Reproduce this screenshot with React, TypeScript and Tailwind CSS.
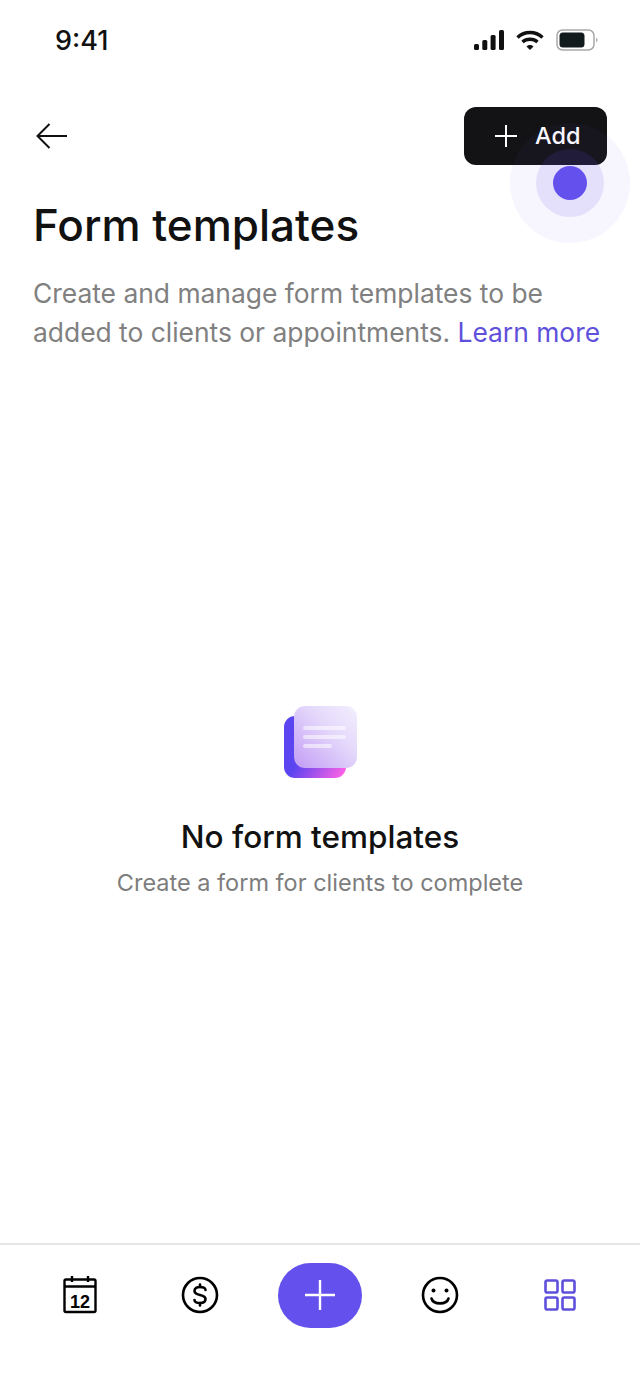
const sans = "font-['Inter','Noto_Sans',sans-serif]";

function StatusIcons() {
  return (
    <div className="flex items-center gap-[12px]">
      <svg width="30" height="20" viewBox="0 0 30 20" fill="#111">
        <rect x="0" y="14" width="5" height="6" rx="1.500" />
        <rect x="8.300" y="10" width="5" height="10" rx="1.500" />
        <rect x="16.600" y="5" width="5" height="15" rx="1.500" />
        <rect x="25" y="0" width="5" height="20" rx="1.500" />
      </svg>
      <svg width="28" height="20" viewBox="0 0 28 20" fill="none" stroke="#111" strokeWidth="3.400">
        <path d="M1.500 7.500C8.500 .8 19.500 .8 26.500 7.500" />
        <path d="M6.500 12C10.500 8.300 17.500 8.300 21.500 12" />
        <path d="M11 16.500L14 19.500L17 16.500C15.300 15 12.700 15 11 16.500Z" fill="#111" strokeWidth="1" />
      </svg>
      <svg width="42" height="22" viewBox="0 0 42 22" fill="none">
        <rect x="1" y="1" width="37" height="20" rx="5.500" stroke="#a9a9a9" strokeWidth="1.500" />
        <rect x="3.500" y="3.500" width="25" height="15" rx="3.500" fill="#111a1c" />
        <path d="M40 8.500c1 .5 1.500 1.500 1.500 2.500s-.5 2-1.500 2.500z" fill="#b5b5b5" />
      </svg>
    </div>
  );
}

function EmptyIcon() {
  return (
    <svg width="74" height="74" viewBox="0 0 74 74" className="block">
      <defs>
        <linearGradient id="back" x1="0" y1="0.3" x2="1" y2="0.9">
          <stop offset="0.35" stopColor="#5b45f0" />
          <stop offset="1" stopColor="#ff62e6" />
        </linearGradient>
        <linearGradient id="front" x1="0" y1="1" x2="1" y2="0">
          <stop offset="0" stopColor="#c29cf5" />
          <stop offset="0.6" stopColor="#e4d8fb" />
          <stop offset="1" stopColor="#f3effe" />
        </linearGradient>
      </defs>
      <rect x="1" y="10" width="62" height="62" rx="11" fill="url(#back)" />
      <rect x="11" y="0" width="63" height="62" rx="11" fill="url(#front)" />
      <rect x="20" y="20" width="43" height="4" rx="2" fill="#fff" fillOpacity="0.55" />
      <rect x="20" y="29" width="43" height="4" rx="2" fill="#fff" fillOpacity="0.55" />
      <rect x="20" y="38" width="29" height="4" rx="2" fill="#fff" fillOpacity="0.55" />
    </svg>
  );
}

function CalendarIcon() {
  return (
    <svg width="34" height="38" viewBox="0 0 34 38" fill="none" stroke="#000" strokeWidth="2.400">
      <rect x="1.500" y="3.500" width="31" height="32.500" rx="1.500" />
      <path d="M1.500 10.500H32.500M9 0V6M25 0V6" />
      <text x="17" y="31.500" textAnchor="middle" fontFamily="Liberation Sans, sans-serif" fontSize="18" fontWeight="700" fill="#000" stroke="none">12</text>
    </svg>
  );
}

function DollarIcon() {
  return (
    <svg width="38" height="38" viewBox="0 0 38 38" fill="none" stroke="#000" strokeWidth="2.600" strokeLinecap="round">
      <circle cx="19" cy="19" r="17" />
      <path d="M24.500 14C24.500 11.800 22 11 19 11C16 11 13.500 12.200 13.500 15C13.500 17.500 16 18.300 19 19C22 19.700 24.500 20.500 24.500 23C24.500 25.800 22 27 19 27C16 27 13.500 26.200 13.500 24" />
      <path d="M19 8.500V11M19 27V29.500" />
    </svg>
  );
}

function SmileIcon() {
  return (
    <svg width="38" height="38" viewBox="0 0 38 38" fill="none" stroke="#000" strokeWidth="2.600" strokeLinecap="round">
      <circle cx="19" cy="19" r="17" />
      <circle cx="12.500" cy="14.500" r="2" fill="#000" stroke="none" />
      <circle cx="25.500" cy="14.500" r="2" fill="#000" stroke="none" />
      <path d="M10.500 22.500C12.500 29 25.500 29 27.500 22.500" />
    </svg>
  );
}

function GridIcon() {
  return (
    <svg width="32" height="32" viewBox="0 0 32 32" fill="none" stroke="#5f50dc" strokeWidth="2.600">
      <rect x="1.500" y="1.500" width="12" height="12" rx="1.800" />
      <rect x="18.500" y="1.500" width="12" height="12" rx="1.800" />
      <rect x="1.500" y="18.500" width="12" height="12" rx="1.800" />
      <rect x="18.500" y="18.500" width="12" height="12" rx="1.800" />
    </svg>
  );
}

export default function App() {
  return (
    <div className={`${sans} relative flex h-[1386px] w-[640px] flex-col overflow-hidden bg-white text-[#111]`}>
      {/* Status bar */}
      <div className="flex h-[80px] items-center justify-between pl-[55px] pr-[42px]">
        <span className="text-[27px] font-medium leading-none">9:41</span>
        <StatusIcons />
      </div>

      {/* Header */}
      <div className="mt-[27px] flex items-center justify-between pl-[36px] pr-[33px]">
        <svg width="32" height="26" viewBox="0 0 32 26" fill="none" stroke="#111" strokeWidth="2">
          <path d="M13.500 1L1.500 13L13.500 25M1.500 13H31" />
        </svg>
        <button className="flex h-[58px] w-[143px] items-center gap-[17px] rounded-[12px] bg-[#131214] pl-[30px] text-white">
          <svg width="24" height="24" viewBox="0 0 24 24" fill="none" stroke="#fff" strokeWidth="2">
            <path d="M12 1V23M1 12H23" />
          </svg>
          <span className="text-[23.500px] font-medium">Add</span>
        </button>
      </div>

      {/* Title and description */}
      <div className="px-[33px]">
        <h1 className="mt-[33px] text-[44px] font-medium leading-[54px]">Form templates</h1>
        <p className="mt-[22px] text-[26.400px] leading-[39px] text-[#808080]">
          Create and manage form templates to be added to clients or appointments. <span className="text-[#5f50dc]">Learn more</span>
        </p>
      </div>

      {/* Empty state */}
      <div className="flex flex-1 flex-col items-center pt-[354px]">
        <EmptyIcon />
        <h2 className="mt-[37px] text-[31.500px] font-medium leading-[40px]">No form templates</h2>
        <p className="mt-[10px] text-[23.500px] leading-[32px] text-[#7d7d7d]">Create a form for clients to complete</p>
      </div>

      {/* Bottom nav */}
      <nav className="grid h-[143px] grid-cols-5 items-start border-t-2 border-[#e6e6e6] px-[20px] pt-[17px]">
        <div className="flex h-[66px] items-center justify-center"><CalendarIcon /></div>
        <div className="flex h-[66px] items-center justify-center"><DollarIcon /></div>
        <div className="flex h-[66px] items-center justify-center">
          <button className="flex h-[65px] w-[84px] items-center justify-center rounded-[33px] bg-[#6450ed]">
            <svg width="32" height="32" viewBox="0 0 32 32" fill="none" stroke="#fff" strokeWidth="2.400">
              <path d="M16 1V31M1 16H31" />
            </svg>
          </button>
        </div>
        <div className="flex h-[66px] items-center justify-center"><SmileIcon /></div>
        <div className="flex h-[66px] items-center justify-center"><GridIcon /></div>
      </nav>

      {/* Coach mark pulse over the Add button */}
      <div className="absolute left-[510px] top-[123px] flex h-[120px] w-[120px] items-center justify-center rounded-full bg-[#6450ed]/[0.05]">
        <div className="flex h-[68px] w-[68px] items-center justify-center rounded-full bg-[#6450ed]/[0.13]">
          <div className="h-[34px] w-[34px] rounded-full bg-[#6450ed]" />
        </div>
      </div>
    </div>
  );
}
